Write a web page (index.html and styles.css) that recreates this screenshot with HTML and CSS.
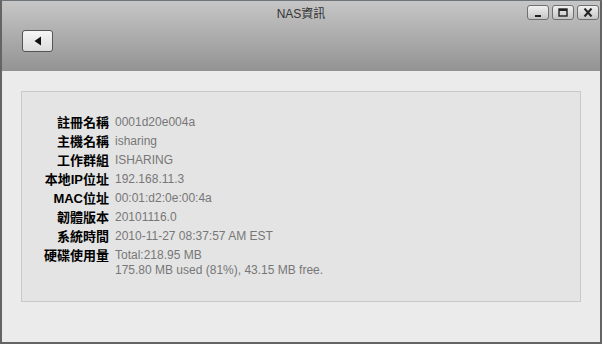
FILE: index.html
```html
<!DOCTYPE html>
<html lang="zh-Hant">
<head>
  <meta charset="UTF-8" />
  <meta name="viewport" content="width=device-width, initial-scale=1.0"/>
  <title>NAS資訊</title>
  <link rel="stylesheet" href="styles.css">
</head>
<body>

  <div class="window">
    <div class="header">
      <div class="titlebar">
        <span class="title">NAS資訊</span>
        <div class="win-buttons">
          <button class="win-btn" title="Minimize">
            <svg width="8" height="8" viewBox="0 0 8 8"><rect x="1" y="6" width="6" height="2" fill="#222"/></svg>
          </button>
          <button class="win-btn" title="Maximize">
            <svg width="10" height="9" viewBox="0 0 10 9"><rect x="1" y="1" width="8" height="7" fill="none" stroke="#222" stroke-width="1.4"/><rect x="1" y="1" width="8" height="2" fill="#222"/></svg>
          </button>
          <button class="win-btn" title="Close">
            <svg width="10" height="9" viewBox="0 0 10 9"><path d="M1.5 0.5 L8.5 8.5 M8.5 0.5 L1.5 8.5" stroke="#222" stroke-width="2"/></svg>
          </button>
        </div>
      </div>
      <button class="back-btn" title="Back">
        <svg width="8" height="10" viewBox="0 0 8 10"><polygon points="7,0.5 7,9.5 0.5,5" fill="#111"/></svg>
      </button>
    </div>

    <div class="content">
      <div class="panel">
        <div class="info">
          <div class="label">註冊名稱</div>
          <div class="value">0001d20e004a</div>

          <div class="label">主機名稱</div>
          <div class="value">isharing</div>

          <div class="label">工作群組</div>
          <div class="value">ISHARING</div>

          <div class="label">本地IP位址</div>
          <div class="value">192.168.11.3</div>

          <div class="label">MAC位址</div>
          <div class="value">00:01:d2:0e:00:4a</div>

          <div class="label">韌體版本</div>
          <div class="value">20101116.0</div>

          <div class="label">系統時間</div>
          <div class="value">2010-11-27 08:37:57 AM EST</div>

          <div class="label">硬碟使用量</div>
          <div class="value">Total:218.95 MB<br>175.80 MB used (81%), 43.15 MB free.</div>
        </div>
      </div>
    </div>
  </div>

</body>
</html>
```

FILE: styles.css
```css
body {
  margin: 0;
  font-family: "Liberation Sans", "Noto Sans CJK TC", sans-serif;
  background: #ebebeb;
}

.window {
  box-sizing: border-box;
  width: 602px;
  height: 344px;
  border: 2px solid #646464;
  border-top: 1px solid #6f7478;
  background: #ebebeb;
  display: flex;
  flex-direction: column;
}

.header {
  height: 70px;
  background: linear-gradient(to bottom, #c6c6c6, #939393);
}

.titlebar {
  position: relative;
  height: 22px;
  display: flex;
  justify-content: center;
  align-items: center;
}

.title {
  font-size: 12px;
  color: #333;
  padding-top: 1px;
}

.win-buttons {
  position: absolute;
  right: 1px;
  top: 4px;
  display: flex;
  gap: 3px;
}

.win-btn {
  box-sizing: border-box;
  width: 22px;
  height: 15px;
  padding: 0;
  border: 1px solid #707070;
  border-radius: 3px;
  background: linear-gradient(to bottom, #f0f0f0, #c4c4c4);
  display: flex;
  align-items: center;
  justify-content: center;
}

.back-btn {
  box-sizing: border-box;
  margin: 7px 0 0 20px;
  width: 31px;
  height: 22px;
  padding: 0;
  border: 1px solid #555;
  border-radius: 3px;
  background: linear-gradient(to bottom, #f6f6f6, #dcdcdc);
  display: flex;
  align-items: center;
  justify-content: center;
}

.content {
  flex: 1;
  padding: 20px 19px 0 19px;
}

.panel {
  box-sizing: border-box;
  height: 211px;
  border: 1px solid #c9c9c9;
  background: #e4e4e4;
  padding-top: 23px;
}

.info {
  display: grid;
  grid-template-columns: 87px 1fr;
  column-gap: 6px;
  row-gap: 4px;
  line-height: 15px;
}

.label {
  text-align: right;
  font-size: 13px;
  font-weight: bold;
  color: #000;
}

.value {
  font-size: 12px;
  color: #777;
}
```
